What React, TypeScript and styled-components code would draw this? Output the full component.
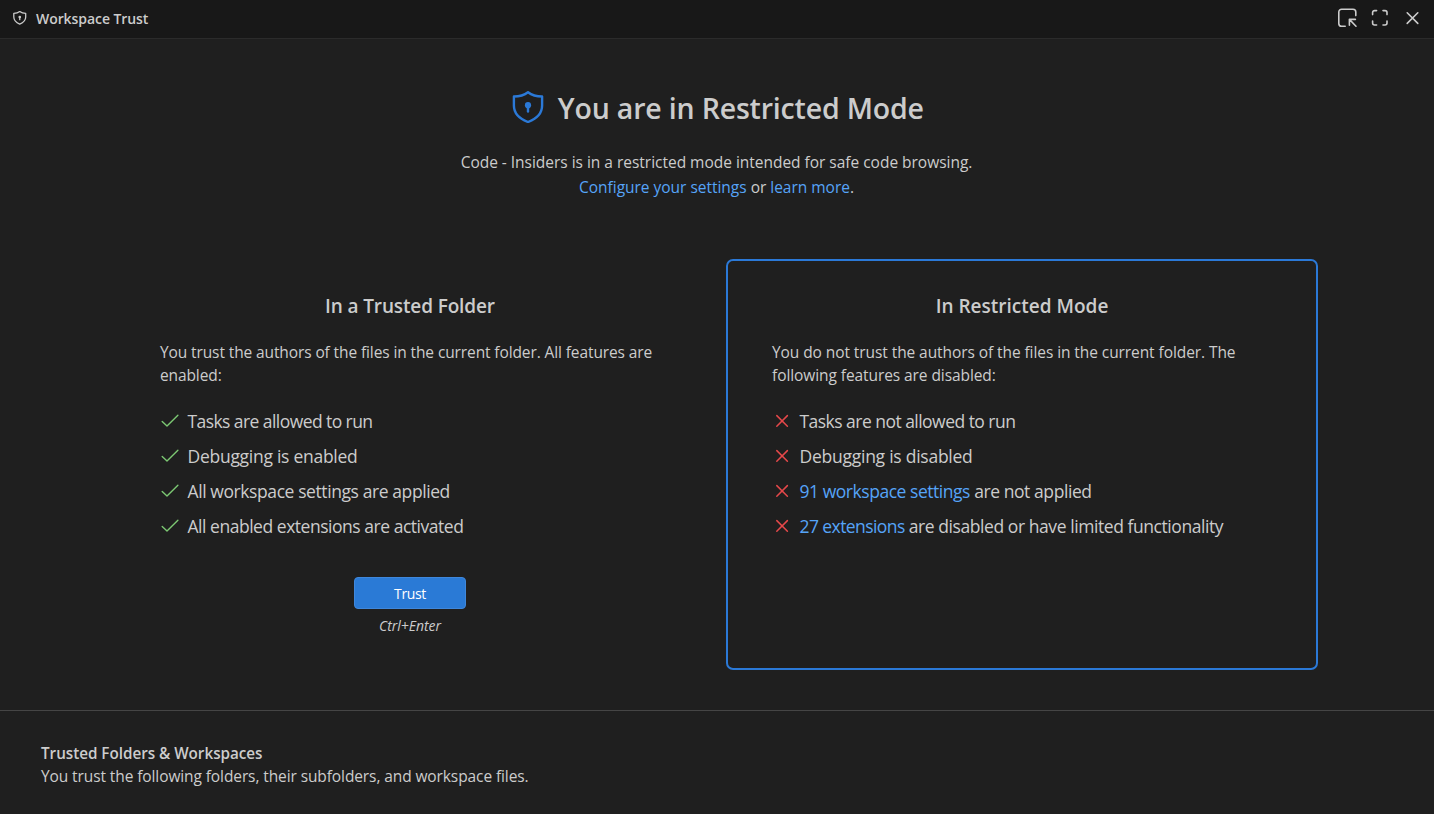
import React from 'react';
import styled, { createGlobalStyle } from 'styled-components';

const GlobalStyle = createGlobalStyle`
  * { box-sizing: border-box; }
  html, body { margin: 0; padding: 0; background: #1f1f1f; }
  body {
    font-family: 'Open Sans', 'Segoe UI', 'Noto Sans', sans-serif;
    font-size: 15.5px;
    color: #cccccc;
    overflow: hidden;
  }
`;

const Modal = styled.div`
  display: flex;
  flex-direction: column;
  width: 100%;
  height: 814px;
  background: #1f1f1f;
  overflow: hidden;
`;

const TitleBar = styled.header`
  display: flex;
  align-items: center;
  justify-content: space-between;
  flex: none;
  height: 39px;
  padding: 0 12px 2px 13px;
  background: #181818;
  border-bottom: 1px solid #2b2b2b;
`;

const TitleBarLabel = styled.div`
  display: flex;
  align-items: center;
  gap: 9.5px;
  font-size: 14px;
  font-weight: 600;
  line-height: 20px;
  letter-spacing: -0.07px;
`;

const TitleBarText = styled.span`
  padding-top: 2px;
`;

const TitleBarActions = styled.div`
  display: flex;
  align-items: center;
  gap: 12px;
`;

const ActionButton = styled.button`
  display: flex;
  padding: 0;
  border: 0;
  background: none;
  color: #cccccc;
`;

const Header = styled.section`
  display: flex;
  flex-direction: column;
  align-items: center;
  flex: none;
  height: 220px;
  padding-top: 46px;
`;

const HeaderTitle = styled.div`
  display: flex;
  align-items: center;
  gap: 13.5px;
  height: 46px;
  padding-left: 2px;

  svg { margin-bottom: 2px; }
`;

const Heading = styled.h1`
  margin: 0;
  font-size: 28.5px;
  font-weight: 600;
  line-height: 46px;
  letter-spacing: -0.18px;
`;

const Description = styled.p`
  margin: 19px 0 0;
  line-height: 25px;
  text-align: center;
  padding-right: 1px;
  letter-spacing: -0.02px;
`;

const Link = styled.a<{ $track?: number }>`
  color: #56a4f8;
  text-decoration: none;
  ${(p) => (p.$track === undefined ? '' : `letter-spacing: ${p.$track}px;`)}
`;

const Cards = styled.section`
  display: flex;
  gap: 20px;
  flex: none;
  height: 411px;
  padding: 0 116px 0 114px;
`;

const Card = styled.article<{ $current?: boolean }>`
  display: flex;
  flex-direction: column;
  flex: none;
  width: 592px;
  height: 411px;
  padding: 32px 44px 0;
  border: 2px solid ${(p) => (p.$current ? '#2b79d7' : 'transparent')};
  border-radius: 7px;
`;

const CardTitle = styled.h2<{ $track: number }>`
  margin: 0 0 21px;
  font-size: 19px;
  font-weight: 600;
  line-height: 27px;
  letter-spacing: ${(p) => p.$track}px;
  text-align: center;
`;

const CardText = styled.p<{ $track?: number }>`
  margin: 0;
  line-height: 23px;
  letter-spacing: ${(p) => p.$track ?? -0.11}px;
`;

const FeatureList = styled.ul`
  display: flex;
  flex-direction: column;
  margin: 17px 0 0;
  padding: 0;
  list-style: none;
`;

const Feature = styled.li<{ $track: number }>`
  display: flex;
  align-items: center;
  gap: 7.5px;
  height: 35px;
  font-size: 17.5px;
  line-height: 35px;
  letter-spacing: ${(p) => p.$track}px;
  white-space: pre;

  svg { margin-bottom: 2px; }
`;

const ButtonArea = styled.div`
  display: flex;
  flex-direction: column;
  align-items: center;
  margin-top: 33px;
`;

const TrustButton = styled.button`
  width: 112px;
  height: 32px;
  padding: 1px 0 0;
  border: 1px solid #3f87db;
  border-radius: 4px;
  background: #2a7ad6;
  color: #ffffff;
  font-family: inherit;
  font-size: 14px;
  line-height: 29px;
  letter-spacing: -0.35px;
`;

const Shortcut = styled.span`
  margin-top: 7px;
  font-size: 14px;
  font-style: italic;
  line-height: 20px;
  letter-spacing: -0.05px;
`;

const Folders = styled.section`
  flex: 1;
  margin-top: 40px;
  padding: 31px 41px 0;
  border-top: 1px solid #454545;
`;

const FoldersTitle = styled.div`
  font-size: 15.25px;
  font-weight: 600;
  line-height: 23px;
  letter-spacing: -0.03px;
`;

function Shield({ size, width, color }: { size: number; width: number; color: string }) {
  return (
    <svg width={size} height={size} viewBox="0 0 32 32" fill="none" stroke={color} strokeWidth={width} strokeLinejoin="round">
      <path d="M16 1.2C12.4 4 8 5.5 1.9 5.5V14.5C1.9 22 7 27.6 16 31C25 27.6 30.1 22 30.1 14.5V5.5C24 5.5 19.6 4 16 1.2Z" />
      <circle cx="16" cy="14.2" r="3.1" fill={color} stroke="none" />
      <path d="M16 15V20.5" strokeLinecap="round" />
    </svg>
  );
}

function Check() {
  return (
    <svg width="20" height="20" viewBox="0 0 20 20" fill="none" stroke="#7cc873" strokeWidth="1.4" strokeLinecap="round" strokeLinejoin="round">
      <path d="M2.2 10.5L7 15.1L17.9 4.3" />
    </svg>
  );
}

function Cross() {
  return (
    <svg width="20" height="20" viewBox="0 0 20 20" fill="none" stroke="#e5484a" strokeWidth="1.5" strokeLinecap="round">
      <path d="M4.8 4.6L15.4 15.2M15.4 4.6L4.8 15.2" />
    </svg>
  );
}

const actionStroke = { fill: 'none', stroke: 'currentColor', strokeWidth: 1.6, strokeLinecap: 'round', strokeLinejoin: 'round' } as const;

export default function App() {
  return (
    <>
      <GlobalStyle />
      <Modal>
        <TitleBar>
          <TitleBarLabel>
            <Shield size={13.5} width={3} color="#cccccc" />
            <TitleBarText>Workspace Trust</TitleBarText>
          </TitleBarLabel>
          <TitleBarActions>
            <ActionButton aria-label="Move into window">
              <svg width="20" height="20" viewBox="0 0 20 20" {...actionStroke}>
                <path d="M7.2 18.2H3.6A2.8 2.8 0 0 1 .8 15.4V4A2.8 2.8 0 0 1 3.6 1.2H15A2.8 2.8 0 0 1 17.8 4V7.6" />
                <path d="M18 18.2L11.4 11.4M11.4 17.2V11.4H17.4" />
              </svg>
            </ActionButton>
            <ActionButton aria-label="Maximize">
              <svg width="20" height="20" viewBox="0 0 20 20" {...actionStroke}>
                <path d="M2.6 6.6V4.6A2 2 0 0 1 4.6 2.6H6.6M13 2.6H15A2 2 0 0 1 17 4.6V6.6M17 13V15A2 2 0 0 1 15 17H13M6.6 17H4.6A2 2 0 0 1 2.6 15V13" />
              </svg>
            </ActionButton>
            <ActionButton aria-label="Close">
              <svg width="20" height="20" viewBox="0 0 20 20" {...actionStroke}>
                <path d="M5.2 4.8L15.8 15.4M15.8 4.8L5.2 15.4" />
              </svg>
            </ActionButton>
          </TitleBarActions>
        </TitleBar>

        <Header>
          <HeaderTitle>
            <Shield size={32} width={2.4} color="#2b79d7" />
            <Heading>You are in Restricted Mode</Heading>
          </HeaderTitle>
          <Description>
            Code - Insiders is in a restricted mode intended for safe code browsing.
            <br />
            <Link>Configure your settings</Link> or <Link>learn more</Link>.
          </Description>
        </Header>

        <Cards>
          <Card>
            <CardTitle $track={-0.13}>In a Trusted Folder</CardTitle>
            <CardText>You trust the authors of the files in the current folder. All features are enabled:</CardText>
            <FeatureList>
              <Feature $track={-0.57}><Check /><span>Tasks are allowed to run</span></Feature>
              <Feature $track={-0.27}><Check /><span>Debugging is enabled</span></Feature>
              <Feature $track={-0.41}><Check /><span>All workspace settings are applied</span></Feature>
              <Feature $track={-0.47}><Check /><span>All enabled extensions are activated</span></Feature>
            </FeatureList>
            <ButtonArea>
              <TrustButton>Trust</TrustButton>
              <Shortcut>Ctrl+Enter</Shortcut>
            </ButtonArea>
          </Card>
          <Card $current>
            <CardTitle $track={0}>In Restricted Mode</CardTitle>
            <CardText $track={-0.08}>You do not trust the authors of the files in the current folder. The following features are disabled:</CardText>
            <FeatureList>
              <Feature $track={-0.53}><Cross /><span>Tasks are not allowed to run</span></Feature>
              <Feature $track={-0.25}><Cross /><span>Debugging is disabled</span></Feature>
              <Feature $track={-0.42}><Cross /><span><Link $track={-0.46}>91 workspace settings</Link> are not applied</span></Feature>
              <Feature $track={-0.43}><Cross /><span><Link $track={-0.58}>27 extensions</Link> are disabled or have limited functionality</span></Feature>
            </FeatureList>
          </Card>
        </Cards>

        <Folders>
          <FoldersTitle>Trusted Folders &amp; Workspaces</FoldersTitle>
          <CardText $track={-0.1}>You trust the following folders, their subfolders, and workspace files.</CardText>
        </Folders>
      </Modal>
    </>
  );
}
